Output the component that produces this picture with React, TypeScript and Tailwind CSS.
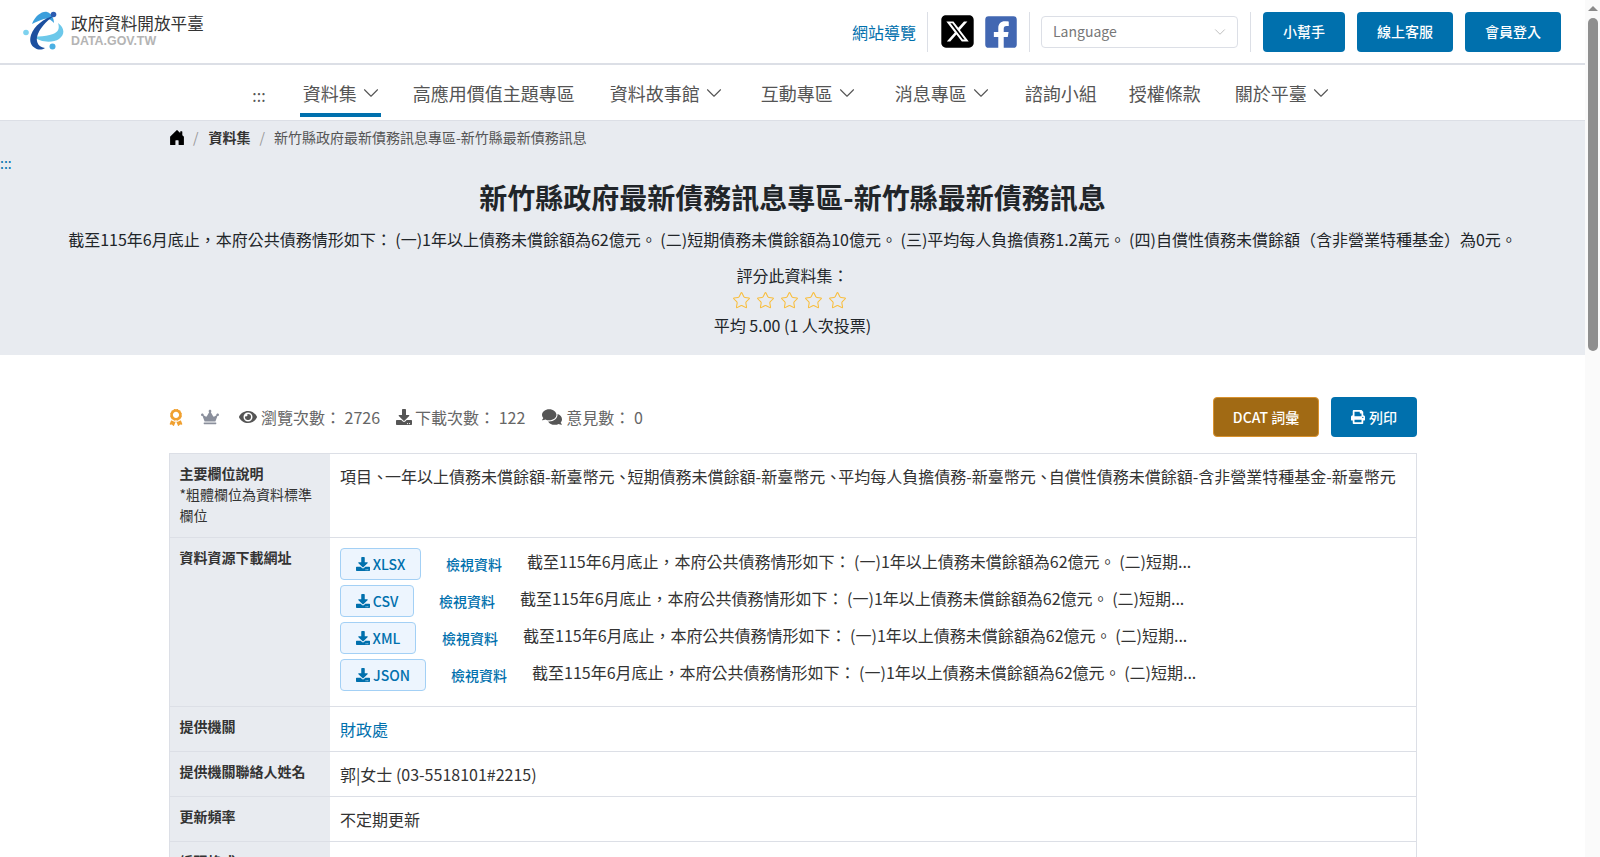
import React from "react";
import { ChevronDown, Star } from "lucide-react";
import { FaEye, FaDownload, FaComments, FaPrint, FaCrown, FaAward, FaFacebookSquare } from "react-icons/fa";
import { FaSquareXTwitter } from "react-icons/fa6";
import { BsHouseDoorFill } from "react-icons/bs";

const desc = "截至115年6月底止，本府公共債務情形如下： (一)1年以上債務未償餘額為62億元。 (二)短期...";

function Logo() {
  return (
    <svg viewBox="0 0 50 46" className="w-[50px] h-[46px]">
      <path d="M13 28C20 35 33 35 39 31 45 27 45 20 38 15 40 21 38 24 33 26 27 28 20 29 13 28Z" fill="#6cc8ea" />
      <path d="M12 16C15 8 22 3 27 4 31 5 34 10 34 15 31 11 27 10 24 11 20 12 16 14 12 16Z" fill="#3b9fdc" />
      <path d="M34 8C24 10 14 18 11 27 9 33 11 38 15 40 18 42 22 42 25 40 19 39 16 35 17 29 19 21 26 13 34 8Z" fill="#1c4f9f" />
      <circle cx="33.500" cy="6.500" r="2.800" fill="#2c5cb2" />
      <circle cx="6" cy="24.500" r="2.800" fill="#7ed2ef" />
      <circle cx="32.500" cy="38.500" r="3" fill="#4bb0e3" />
    </svg>
  );
}

function Sep() {
  return <span className="w-px h-10 bg-[#dcdfe6]" />;
}

function NavItem({ label, chevron, cls }: { label: string; chevron?: boolean; cls?: string }) {
  return (
    <a className={`flex items-center gap-[1px] h-[52px] pt-[8px] px-[2px] border-b-4 border-transparent ${cls ?? ""}`}>
      <span className="text-[18px] text-[#555]">{label}</span>
      {chevron && <ChevronDown className="w-[26px] h-[26px] text-[#555]" strokeWidth={1} />}
    </a>
  );
}

function Resource({ type, w, cls }: { type: string; w: string; cls?: string }) {
  return (
    <div className="flex items-center h-[37px]">
      <a className={`flex items-center justify-center gap-[3px] h-[32px] rounded-[4px] border border-[#a3d0f5] bg-[#edf5fe] text-[#0070ad] text-[14px] font-medium ${w}`}>
        <FaDownload className="w-[14px] h-[14px]" />
        {type}
      </a>
      <a className={`text-[#0070ad] text-[14px] font-medium ${cls ?? "ml-[25px]"}`}>檢視資料</a>
      <span className="ml-[25px] text-[16px] text-[#333] -mt-[6px]">{desc}</span>
    </div>
  );
}

function Row({ label, children, cls }: { label: React.ReactNode; children: React.ReactNode; cls: string }) {
  return (
    <div className={`flex border-b border-[#dcdfe6] ${cls}`}>
      <div className="w-[160px] shrink-0 bg-[#e8ebf0] pl-[9.500px] pr-[8px] pt-[9px] text-[14px] leading-[21px] text-[#333]">{label}</div>
      <div className="flex-1 pl-[10px] pr-[10px] pt-[10px] text-[16px] leading-[24px] text-[#333]">{children}</div>
    </div>
  );
}

const Comma = () => <span className="tracking-[-3px]">、</span>;

function FakeScrollbar() {
  return (
    <div className="absolute top-0 right-0 bottom-0 w-[15px] bg-[#fafafa]">
      <div className="absolute top-[6px] left-[3px] w-0 h-0 border-l-[5px] border-r-[5px] border-b-[5px] border-l-transparent border-r-transparent border-b-[#8a8a8a]" />
      <div className="absolute top-[18px] left-[3px] w-[10px] h-[333px] rounded-[5px] bg-[#8f8f8f]" />
    </div>
  );
}

export default function App() {
  return (
    <div className="relative h-screen overflow-hidden pr-[15px] bg-white text-[#212529] font-['Noto_Sans_CJK_TC','Noto_Sans',sans-serif]">
      <header className="flex items-center justify-between h-[65px] pl-[20px] pr-[24px] border-b-2 border-[#dcdfe6]">
        <a className="flex items-center gap-[1px] -mt-[1px]">
          <Logo />
          <div className="flex flex-col -mt-[2px]">
            <span className="text-[16.600px] leading-[20px] text-[#333]">政府資料開放平臺</span>
            <span className="mt-[2px] text-[12.400px] leading-[13px] font-bold text-[#b4b4b4] font-['Liberation_Sans',sans-serif]">DATA.GOV.TW</span>
          </div>
        </a>
        <div className="flex items-center">
          <a className="text-[16px] text-[#0070ad] mr-[11px]">網站導覽</a>
          <Sep />
          <FaSquareXTwitter className="w-[37px] h-[37px] text-black ml-[11px]" />
          <FaFacebookSquare className="w-[36px] h-[36px] text-[#4267b2] ml-[7px] mr-[10px]" />
          <Sep />
          <div className="flex items-center justify-between w-[197px] h-[32px] ml-[11px] mr-[12px] pl-[11px] pr-[8px] rounded-[4px] border border-[#dcdfe6] text-[14px] text-[#777]">
            Language
            <ChevronDown className="w-[18px] h-[18px] text-[#aaa]" strokeWidth={1} />
          </div>
          <Sep />
          <a className="flex items-center justify-center w-[82px] h-[40px] ml-[12px] rounded-[4px] bg-[#0070ad] text-white text-[14px] font-medium">小幫手</a>
          <a className="flex items-center justify-center w-[96px] h-[40px] ml-[12px] rounded-[4px] bg-[#0070ad] text-white text-[14px] font-medium">線上客服</a>
          <a className="flex items-center justify-center w-[96px] h-[40px] ml-[12px] rounded-[4px] bg-[#0070ad] text-white text-[14px] font-medium">會員登入</a>
        </div>
      </header>

      <nav className="flex items-start justify-center gap-[30px] h-[56px] pl-[3px] border-b border-[#dcdfe6]">
        <span className="flex items-center h-[52px] pt-[8px] text-[16px] text-[#555] mr-[4px]">:::</span>
        <a className="flex items-center gap-[1px] h-[52px] pt-[8px] pl-[3px] pr-[3px] border-b-4 border-[#0070ad]">
          <span className="text-[18px] text-[#555]">資料集</span>
          <ChevronDown className="w-[26px] h-[26px] -mr-[6px] text-[#555]" strokeWidth={1} />
        </a>
        <NavItem label="高應用價值主題專區" cls="mr-[1px]" />
        <NavItem label="資料故事館" chevron />
        <NavItem label="互動專區" chevron cls="mr-[1px]" />
        <NavItem label="消息專區" chevron cls="-mr-[3px]" />
        <NavItem label="諮詢小組" cls="-mr-[2px]" />
        <NavItem label="授權條款" />
        <NavItem label="關於平臺" chevron />
      </nav>

      <section className="bg-[#e8ebf0] h-[234px]">
        <div className="flex items-center h-[32px] pl-[168px] text-[14px]">
          <BsHouseDoorFill className="w-[18px] h-[17px] text-black" />
          <span className="ml-[7px] mr-[10px] text-[#999]">/</span>
          <span className="font-bold text-[#333]">資料集</span>
          <span className="mx-[9px] text-[#999]">/</span>
          <span className="text-[#555]">新竹縣政府最新債務訊息專區-新竹縣最新債務訊息</span>
        </div>
        <a className="block mt-[3px] h-[14px] leading-[14px] text-[14px] text-[#0070ad]">:::</a>
        <h1 className="mt-[7px] text-center text-[28px] leading-[40px] font-bold text-[#212529]">新竹縣政府最新債務訊息專區-新竹縣最新債務訊息</h1>
        <p className="mt-[10px] text-center text-[16px] leading-[24px] text-[#212529]">截至115年6月底止，本府公共債務情形如下： (一)1年以上債務未償餘額為62億元。 (二)短期債務未償餘額為10億元。 (三)平均每人負擔債務1.2萬元。 (四)自償性債務未償餘額（含非營業特種基金）為0元。</p>
        <p className="mt-[12px] text-center text-[16px] leading-[24px]">評分此資料集：</p>
        <div className="flex justify-center gap-[5px] h-[24px] mt-[1px] items-center pr-[6px]">
          {[0, 1, 2, 3, 4].map((i) => (
            <Star key={i} className="w-[19px] h-[19px] text-[#f9bd3a]" strokeWidth={1.3} />
          ))}
        </div>
        <p className="text-center text-[16px] leading-[26px]">平均 5.00 (1 人次投票)</p>
      </section>

      <main className="pl-[169px] pr-[168px]">
        <div className="flex items-center justify-between h-[40px] mt-[42px] mb-[16px]">
          <div className="flex items-center text-[16px] text-[#666]">
            <FaAward className="w-[16px] h-[17px] text-[#f0a030] -ml-[1px]" />
            <FaCrown className="w-[18px] h-[16px] text-[#8a8f9c] ml-[17px]" />
            <FaEye className="w-[18px] h-[16px] text-[#555] ml-[20px] mr-[4px]" />
            瀏覽次數： 2726
            <FaDownload className="w-[16px] h-[16px] text-[#555] ml-[16px] mr-[3px]" />
            下載次數： 122
            <FaComments className="w-[20px] h-[18px] text-[#555] ml-[17px] mr-[4px]" />
            意見數： 0
          </div>
          <div className="flex items-center gap-[12px]">
            <a className="flex items-center justify-center w-[106px] h-[40px] rounded-[4px] border border-[#d9922e] bg-[#a16a14] text-white text-[14px] font-medium">DCAT 詞彙</a>
            <a className="flex items-center justify-center gap-[4px] w-[86px] h-[40px] rounded-[4px] bg-[#0070ad] text-white text-[14px] font-medium">
              <FaPrint className="w-[14px] h-[14px]" />
              列印
            </a>
          </div>
        </div>

        <div className="border-l border-r border-t border-[#dcdfe6]">
          <Row cls="h-[84px]" label={<><b>主要欄位說明</b><br />*粗體欄位為資料標準欄位</>}>
            項目<Comma />一年以上債務未償餘額-新臺幣元<Comma />短期債務未償餘額-新臺幣元<Comma />平均每人負擔債務-新臺幣元<Comma />自償性債務未償餘額-含非營業特種基金-新臺幣元
          </Row>
          <Row cls="h-[169px]" label={<b>資料資源下載網址</b>}>
            <div className="-mt-[3px]">
              <Resource type="XLSX" w="w-[81px]" />
              <Resource type="CSV" w="w-[74px]" />
              <Resource type="XML" w="w-[76px]" cls="ml-[26px]" />
              <Resource type="JSON" w="w-[86px]" />
            </div>
          </Row>
          <Row cls="h-[45px]" label={<b>提供機關</b>}>
            <a className="text-[#0070ad]">財政處</a>
          </Row>
          <Row cls="h-[45px]" label={<b>提供機關聯絡人姓名</b>}>郭|女士 (03-5518101#2215)</Row>
          <Row cls="h-[45px]" label={<b>更新頻率</b>}>不定期更新</Row>
          <Row cls="h-[45px]" label={<b>編碼格式</b>}>UTF-8</Row>
        </div>
      </main>
      <FakeScrollbar />
    </div>
  );
}
